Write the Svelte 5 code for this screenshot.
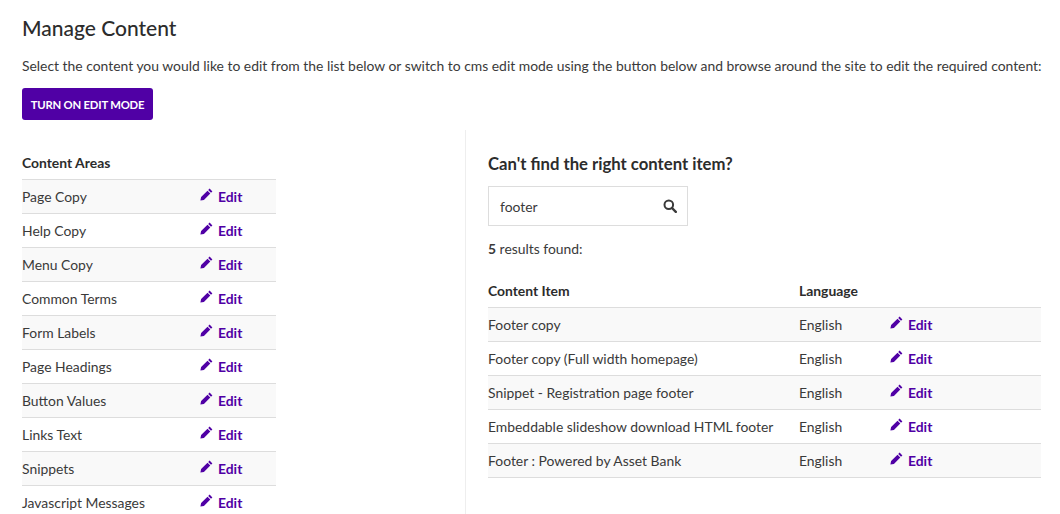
<script>
    const areas = ['Page Copy', 'Help Copy', 'Menu Copy', 'Common Terms', 'Form Labels', 'Page Headings', 'Button Values', 'Links Text', 'Snippets', 'Javascript Messages'];
    const results = ['Footer copy', 'Footer copy (Full width homepage)', 'Snippet - Registration page footer', 'Embeddable slideshow download HTML footer', 'Footer : Powered by Asset Bank'];
</script>

{#snippet editLink()}
    <a class="edit" href="#edit">
        <svg class="pencil" width="13" height="13" viewBox="0 0 13 13" aria-hidden="true">
            <path d="M9.6 0.6 12.4 3.4 11 4.8 8.2 2ZM7.5 2.7 10.3 5.5 3.9 11.9 0.4 12.6 1.1 9.1Z" fill="currentColor"/>
        </svg>
        <span>Edit</span>
    </a>
{/snippet}

<main class="page">
    <h1>Manage Content</h1>
    <p class="intro">Select the content you would like to edit from the list below or switch to cms edit mode using the button below and browse around the site to edit the required content:</p>
    <button class="edit-mode">TURN ON EDIT MODE</button>

    <div class="columns">
        <section class="left">
            <table class="areas">
                <thead><tr><th>Content Areas</th><th></th></tr></thead>
                <tbody>
                    {#each areas as area}
                        <tr><td class="name">{area}</td><td>{@render editLink()}</td></tr>
                    {/each}
                </tbody>
            </table>
        </section>

        <section class="right">
            <h2>Can't find the right content item?</h2>
            <div class="search">
                <span class="term">footer</span>
                <svg width="14" height="14" viewBox="0 0 14 14" fill="none" stroke="currentColor" aria-hidden="true">
                    <circle cx="5.8" cy="5.8" r="4.3" stroke-width="2"/>
                    <line x1="9" y1="9" x2="12.8" y2="12.8" stroke-width="2.4" stroke-linecap="round"/>
                </svg>
            </div>
            <p class="count"><strong>5</strong> results found:</p>
            <table class="items">
                <thead><tr><th class="c1">Content Item</th><th class="c2">Language</th><th></th></tr></thead>
                <tbody>
                    {#each results as item}
                        <tr><td>{item}</td><td>English</td><td>{@render editLink()}</td></tr>
                    {/each}
                </tbody>
            </table>
        </section>
    </div>
</main>

<style>
    :global(body) {
        margin: 0;
        background: #fff;
        overflow: hidden;
    }

    .page {
        height: 514px;
        overflow: hidden;
        box-sizing: border-box;
        padding: 14px 19px 0 22px;
        font-family: Lato, sans-serif;
        font-size: 13.9px;
        color: #3a3a3a;
    }

    h1 {
        margin: 0;
        font-size: 21px;
        line-height: 28px;
        font-weight: 500;
        color: #2c2c2c;
    }

    .intro {
        margin: 13px 0 0;
        line-height: 22px;
        white-space: nowrap;
    }

    .edit-mode {
        display: block;
        margin: 11px 0 0;
        width: 131px;
        height: 32px;
        padding: 0;
        border: 0;
        border-radius: 3px;
        background: #5000a5;
        color: #fff;
        font: 700 11.3px Lato, sans-serif;
        letter-spacing: -0.2px;
    }

    .columns {
        display: grid;
        grid-template-columns: 444px 1fr;
        margin-top: 10px;
    }

    .left {
        border-right: 1px solid #eee;
        padding-top: 16px;
    }

    .right {
        padding: 22px 0 0 22px;
    }

    table {
        border-collapse: collapse;
        table-layout: fixed;
    }

    .areas {
        width: 254px;
    }

    .items {
        width: 553px;
        margin-top: 14px;
    }

    .c1 { width: 311px; }
    .c2 { width: 91px; }

    th {
        text-align: left;
        padding: 0;
        height: 33px;
        font-weight: 700;
        color: #2c2c2c;
    }

    td {
        padding: 0;
        height: 33px;
        border-top: 1px solid #ddd;
        border-bottom: 1px solid #ddd;
        white-space: nowrap;
    }

    .areas th:first-child, .areas .name {
        width: 178px;
    }

    tbody tr:nth-child(odd) {
        background: #f9f9f9;
    }

    .edit {
        display: inline-flex;
        align-items: center;
        gap: 5px;
        vertical-align: 1px;
        color: #5000a5;
        font-weight: 700;
        text-decoration: none;
    }

    .pencil {
        margin-top: -5px;
    }

    h2 {
        margin: 0;
        font-size: 16.7px;
        line-height: 24px;
        font-weight: 700;
        color: #2c2c2c;
    }

    .search {
        display: flex;
        align-items: center;
        justify-content: space-between;
        box-sizing: border-box;
        width: 200px;
        height: 40px;
        margin-top: 10px;
        padding: 0 10px 0 11px;
        border: 1px solid #ddd;
    }

    .count {
        margin: 12px 0 0;
        line-height: 22px;
    }
</style>
